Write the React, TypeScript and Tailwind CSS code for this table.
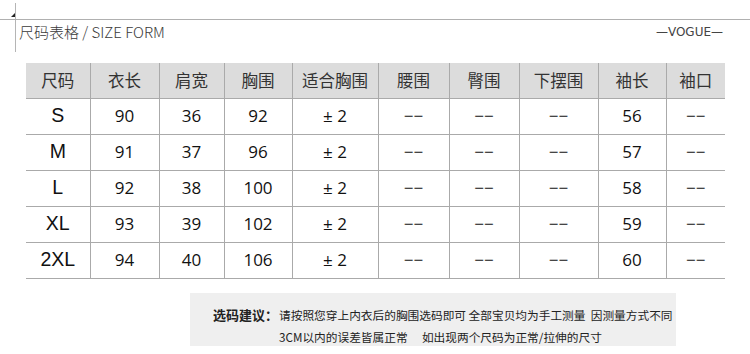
const cols = [
  { label: '尺码', w: 64 },
  { label: '衣长', w: 69 },
  { label: '肩宽', w: 65 },
  { label: '胸围', w: 68 },
  { label: '适合胸围', w: 86 },
  { label: '腰围', w: 71 },
  { label: '臀围', w: 70 },
  { label: '下摆围', w: 79 },
  { label: '袖长', w: 68 },
  { label: '袖口', w: 59 },
];

const rows = [
  ['S', '90', '36', '92', '± 2', '−−', '−−', '−−', '56', '−−'],
  ['M', '91', '37', '96', '± 2', '−−', '−−', '−−', '57', '−−'],
  ['L', '92', '38', '100', '± 2', '−−', '−−', '−−', '58', '−−'],
  ['XL', '93', '39', '102', '± 2', '−−', '−−', '−−', '59', '−−'],
  ['2XL', '94', '40', '106', '± 2', '−−', '−−', '−−', '60', '−−'],
];

export default function App() {
  return (
    <div className="w-[750px] h-[354px] bg-white overflow-hidden font-['Noto_Sans_CJK_SC',sans-serif]">
      <div className="pt-[3px]">
        <div className="relative ml-[15px] h-[49px] pt-[16px] border-l border-[#b5b5b5]">
          <svg className="absolute -left-[5px] top-[10px]" width="4" height="4" viewBox="0 0 4 4">
            <path d="M4 0 L4 4 L0 4 Z" fill="#222" />
          </svg>
          <div className="-ml-[16px] w-[750px] h-px bg-[#b0b0b0]" />
          <div className="flex justify-between items-center pl-[3px] pr-[27px] mt-[1px]">
            <span className="text-[15px] leading-[22px] text-[#3a3a3a] font-light">尺码表格 / SIZE FORM</span>
            <span className="text-[12px] leading-[22px] text-[#444] font-['DejaVu_Sans',sans-serif]">—VOGUE—</span>
          </div>
        </div>
      </div>

      <table className="ml-[26px] mt-[11px] border-collapse table-fixed">
        <thead>
          <tr className="bg-[#dcdcdc] h-[35px]">
            {cols.map((c, i) => (
              <th
                key={c.label}
                style={{ width: c.w }}
                className={`p-0 font-normal text-[16.5px] text-[#333] border-b border-[#aaa] ${i > 0 ? 'border-l' : ''}`}
              >
                {c.label}
              </th>
            ))}
          </tr>
        </thead>
        <tbody>
          {rows.map((r) => (
            <tr key={r[0]} className="h-[36px]">
              {r.map((v, i) => (
                <td
                  key={i}
                  className={`p-0 text-center text-[#111] border-b border-[#aaa] ${
                    i === 0 ? "text-[19.5px] font-['Liberation_Sans',sans-serif] border-l-0" : "text-[17px] font-['Open_Sans',sans-serif] border-l"
                  }`}
                >
                  {v}
                </td>
              ))}
            </tr>
          ))}
        </tbody>
      </table>

      <div className="ml-[190px] mt-[14px] w-[486px] h-[53px] bg-[#efefef] pt-[11px] text-[11.7px] leading-[22px] text-[#222] whitespace-nowrap">
        <div className="flex">
          <span className="w-[89px] text-right pr-[1px] text-[13px] font-bold">选码建议：</span>
          <div>
            <div>请按照您穿上内衣后的胸围选码即可 全部宝贝均为手工测量&nbsp; 因测量方式不同</div>
            <div>3CM以内的误差皆属正常　 如出现两个尺码为正常/拉伸的尺寸</div>
          </div>
        </div>
      </div>
    </div>
  );
}
